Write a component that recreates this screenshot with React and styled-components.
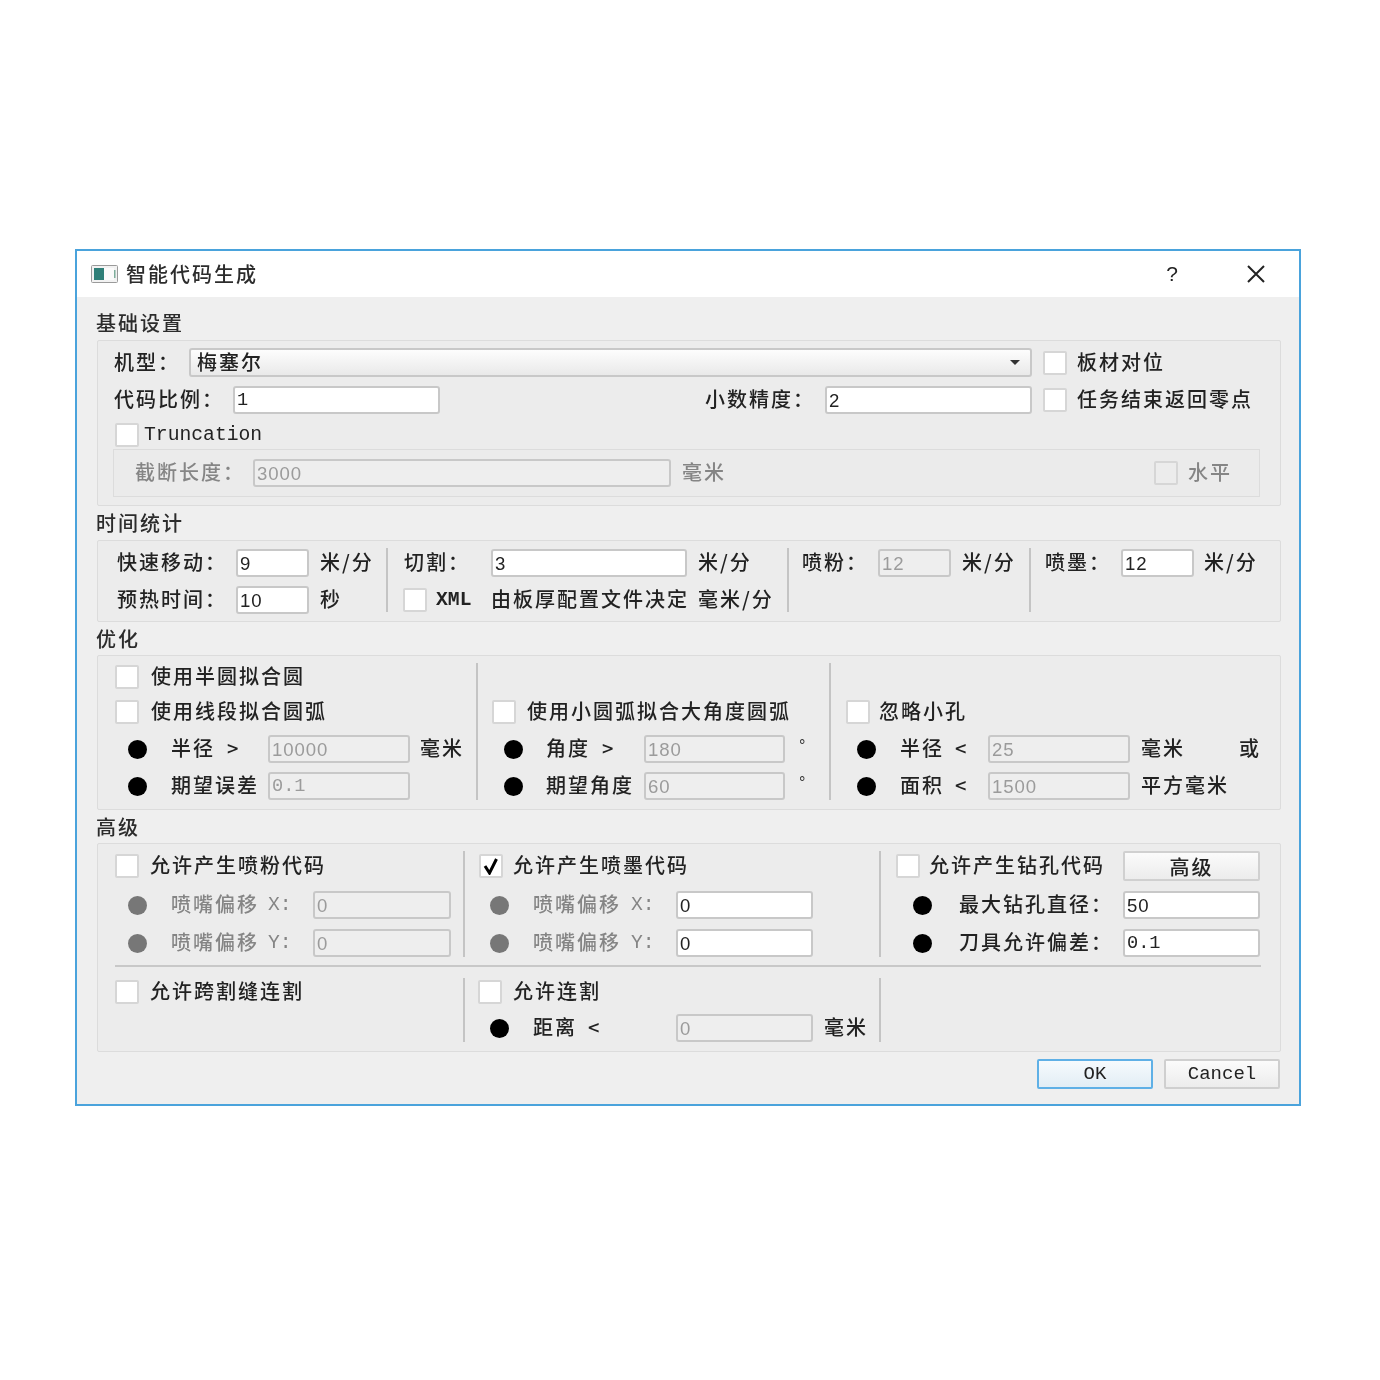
import React from "react";
import styled, { createGlobalStyle } from "styled-components";

const Global = createGlobalStyle`
  html, body { margin: 0; padding: 0; background: #fff; }
  body { font-family: "Noto Sans CJK SC", "Liberation Sans", sans-serif; }
  #root { width: 1380px; height: 1380px; padding: 249px 0 0 75px; box-sizing: border-box; overflow: hidden; }
`;

const Dialog = styled.div`
  width: 1226px; height: 857px; box-sizing: border-box;
  border: 2px solid #4aa3dc;
  background: #efefef; display: flex; flex-direction: column;
  color: #222; filter: blur(0.7px);
`;
const TitleBar = styled.div`
  height: 46px; flex: none; background: #fff; display: flex; align-items: center; padding: 0 0 0 14px;
`;
const TitleText = styled.div`
  font-size: 20px; font-weight: 500; letter-spacing: 2px; margin-left: 8px; flex: 1; line-height: 44px; color: #2c2c2c;
`;
const Help = styled.div`
  font: 21px "Liberation Sans", sans-serif; width: 20px; text-align: center; margin-right: 64px; color: #222;
`;
const CloseWrap = styled.div` width: 20px; height: 20px; margin-right: 33px; `;
const Body = styled.div` flex: 1; padding: 9px 18px 0 20px; display: flex; flex-direction: column; `;
const Heading = styled.div`
  height: ${p => p.$h || 34}px; line-height: ${p => p.$h || 34}px; font-size: 20px; font-weight: 500;
  letter-spacing: 2px; margin-left: -1px; color: #2c2c2c;
`;
const Panel = styled.div`
  box-sizing: border-box; height: ${p => p.$h}px; background: #ececec;
  border: 1px solid #dcdcdc; border-radius: 2px;
  padding: ${p => p.$pad || "0"};
`;
const Columns = styled.div`
  display: grid; grid-template-columns: ${p => p.$cols};
`;
const Col = styled.div` padding: ${p => p.$top || 0}px 0 0 ${p => p.$left || 0}px; min-width: 0; `;
const Sep = styled.div` width: 2px; background: #c4c4c4; height: ${p => p.$h}px; margin-top: ${p => p.$top || 0}px; `;
const Divider = styled.div` height: 2px; background: #c8c8c8; margin: 8px 19px 11px 17px; `;
const Row = styled.div`
  display: grid; grid-template-columns: ${p => p.$cols}; align-items: center;
  height: ${p => p.$h || 28}px; margin-top: ${p => p.$mt || 0}px;
`;
const Label = styled.div`
  font-size: 20px; font-weight: 500; letter-spacing: 2px; white-space: nowrap; line-height: 26px; padding-bottom: 2px;
  color: ${p => p.$off ? "#858585" : "#222"};
`;
const Latin = styled.div`
  font: ${p => p.$bold ? "bold " : ""}19.7px "Liberation Mono", monospace; white-space: nowrap;
  color: ${p => p.$off ? "#858585" : "#222"};
`;
const Degree = styled.div`
  font: 16px "Liberation Sans", sans-serif; color: #333; transform: translateY(-3px); margin-left: 1px;
`;
const Field = styled.div`
  box-sizing: border-box; height: 28px; border: 2px solid #c8c8c8; border-radius: 3px;
  background: ${p => p.$off ? "#eeeeee" : "#fff"};
  color: ${p => p.$off ? "#9b9b9b" : "#222"};
  font: 18.6px/26px ${p => p.$mono ? '"Liberation Mono", monospace' : '"Liberation Sans", sans-serif'};
  letter-spacing: ${p => p.$mono ? "0" : "0.9px"}; padding-left: 2px; white-space: nowrap; overflow: hidden;
`;
const Combo = styled.div`
  box-sizing: border-box; height: 29px; border: 2px solid #c8c8c8; border-radius: 3px;
  background: linear-gradient(#fdfdfd, #e9e9e9); display: flex; align-items: center; justify-content: space-between;
  padding: 0 10px 2px 6px; font-size: 20px; font-weight: 500; letter-spacing: 2px; color: #222;
`;
const Arrow = styled.div`
  width: 0; height: 0; margin-top: 2px; border-left: 5px solid transparent; border-right: 5px solid transparent; border-top: 5px solid #333;
`;
const Box = styled.div`
  box-sizing: border-box; width: 24px; height: 24px; border: 2px solid #d6d6d6; border-radius: 2px;
  background: ${p => p.$off ? "#ececec" : "#fff"}; display: flex; align-items: center; justify-content: center;
  margin-left: ${p => p.$ml || 0}px;
`;
const Dot = styled.div`
  width: 19px; height: 19px; border-radius: 50%; background: ${p => p.$off ? "#777" : "#000"};
  margin-left: ${p => p.$ml || 0}px;
`;
const Inner = styled.div`
  box-sizing: border-box; height: 48px; margin: 4px 20px 0 -1px; border: 1px solid #dcdcdc; background: #ebebeb;
  display: grid; grid-template-columns: 118px 418px 11px 472px 34px 1fr; align-items: center; padding-left: 21px;
`;
const Footer = styled.div` display: flex; justify-content: flex-end; gap: 11px; margin-top: 7px; padding-right: 1px; `;
const Btn = styled.div`
  box-sizing: border-box; width: 116px; height: 30px; border-radius: 2px;
  border: 2px solid ${p => p.$primary ? "#5fb0e6" : "#cfcfcf"};
  background: ${p => p.$primary ? "linear-gradient(#f6fafd, #e2edf5)" : "linear-gradient(#fbfbfb, #ececec)"};
  display: flex; align-items: center; justify-content: center;
  font: 19px "Liberation Mono", monospace; color: #222;
`;
const SmallBtn = styled(Btn)`
  width: 137px; font-family: "Noto Sans CJK SC", sans-serif; font-size: 20px; font-weight: 500; letter-spacing: 2px;
  border-color: #d0d0d0;
`;

const Check = () => (
  <svg width="18" height="18" viewBox="0 0 18 18"><path d="M3 9 L7.5 16 L14.5 2" fill="none" stroke="#000" strokeWidth="3" /></svg>
);

const AppIcon = () => (
  <svg width="27" height="18" viewBox="0 0 27 18">
    <rect x="0.5" y="0.5" width="26" height="17" rx="1" fill="#f2f2f2" stroke="#9a9a9a" />
    <rect x="3" y="3" width="10" height="12" fill="#2f7f78" />
    <rect x="13" y="3" width="10" height="12" fill="#fbfbfb" />
    <rect x="23" y="5" width="1.5" height="8" fill="#7fae9c" />
  </svg>
);

const Close = () => (
  <svg width="20" height="20" viewBox="0 0 20 20"><path d="M2 2 L18 18 M18 2 L2 18" stroke="#222" strokeWidth="2" fill="none" /></svg>
);

const unitRow = "119px 73px 11px 1fr";
const optCb1 = "36px 1fr";
const optRow1 = "56px 56px 41px 142px 10px 1fr";
const optRow2 = "54px 56px 42px 141px 13px 1fr";
const optRow3 = "54px 55px 33px 142px 11px 98px auto";
const advRow1 = "56px 97px 45px 138px";
const advRow2 = "54px 98px 45px 137px";
const advRow3 = "63px 164px 137px";

export default function App() {
  return (
    <>
      <Global />
      <Dialog>
        <TitleBar>
          <AppIcon />
          <TitleText>智能代码生成</TitleText>
          <Help>?</Help>
          <CloseWrap><Close /></CloseWrap>
        </TitleBar>
        <Body>
          <Heading>基础设置</Heading>
          <Panel $h={166} $pad="7px 0 0 16px">
            <Row $cols="75px 843px 11px 23px 11px 1fr" $h={29}>
              <Label>机型：</Label>
              <Combo>梅塞尔<Arrow /></Combo>
              <span />
              <Box />
              <span />
              <Label>板材对位</Label>
            </Row>
            <Row $cols="119px 207px 265px 120px 207px 11px 23px 11px 1fr" $mt={9}>
              <Label>代码比例：</Label>
              <Field $mono>1</Field>
              <span />
              <Label>小数精度：</Label>
              <Field>2</Field>
              <span />
              <Box />
              <span />
              <Label>任务结束返回零点</Label>
            </Row>
            <Row $cols="30px 1fr" $h={22} $mt={9}>
              <Box $ml={1} />
              <Latin>Truncation</Latin>
            </Row>
            <Inner>
              <Label $off>截断长度：</Label>
              <Field $off>3000</Field>
              <span />
              <Label $off>毫米</Label>
              <Box $off />
              <Label $off>水平</Label>
            </Inner>
          </Panel>

          <Heading>时间统计</Heading>
          <Panel $h={82}>
            <Columns $cols="288px 2px 399px 2px 240px 2px 1fr">
              <Col $left={19} $top={8}>
                <Row $cols={unitRow}>
                  <Label>快速移动：</Label>
                  <Field>9</Field>
                  <span />
                  <Label>米/分</Label>
                </Row>
                <Row $cols={unitRow} $mt={9}>
                  <Label>预热时间：</Label>
                  <Field>10</Field>
                  <span />
                  <Label>秒</Label>
                </Row>
              </Col>
              <Sep $h={64} $top={7} />
              <Col $left={16} $top={8}>
                <Row $cols="87px 196px 11px 1fr">
                  <Label>切割：</Label>
                  <Field>3</Field>
                  <span />
                  <Label>米/分</Label>
                </Row>
                <Row $cols="32px 55px 207px 1fr" $mt={9}>
                  <Box $ml={-1} />
                  <Latin $bold>XML</Latin>
                  <Label>由板厚配置文件决定</Label>
                  <Label>毫米/分</Label>
                </Row>
              </Col>
              <Sep $h={64} $top={7} />
              <Col $left={13} $top={8}>
                <Row $cols="76px 73px 11px 1fr">
                  <Label>喷粉：</Label>
                  <Field $off>12</Field>
                  <span />
                  <Label>米/分</Label>
                </Row>
              </Col>
              <Sep $h={64} $top={7} />
              <Col $left={14} $top={8}>
                <Row $cols="76px 73px 10px 1fr">
                  <Label>喷墨：</Label>
                  <Field>12</Field>
                  <span />
                  <Label>米/分</Label>
                </Row>
              </Col>
            </Columns>
          </Panel>

          <Heading $h={33}>优化</Heading>
          <Panel $h={155}>
            <Columns $cols="378px 2px 351px 2px 1fr">
              <Col $left={17} $top={7}>
                <Row $cols={optCb1} $h={26}>
                  <Box />
                  <Label>使用半圆拟合圆</Label>
                </Row>
                <Row $cols={optCb1} $h={26} $mt={9}>
                  <Box />
                  <Label>使用线段拟合圆弧</Label>
                </Row>
                <Row $cols={optRow1} $mt={11}>
                  <Dot $ml={13} />
                  <Label>半径</Label>
                  <Label>&gt;</Label>
                  <Field $off>10000</Field>
                  <span />
                  <Label>毫米</Label>
                </Row>
                <Row $cols={optRow1} $mt={9}>
                  <Dot $ml={13} />
                  <Label>期望误差</Label>
                  <span />
                  <Field $off $mono>0.1</Field>
                </Row>
              </Col>
              <Sep $h={137} $top={7} />
              <Col $left={14} $top={7}>
                <Row $cols="35px 1fr" $h={26} $mt={35}>
                  <Box />
                  <Label>使用小圆弧拟合大角度圆弧</Label>
                </Row>
                <Row $cols={optRow2} $mt={11}>
                  <Dot $ml={12} />
                  <Label>角度</Label>
                  <Label>&gt;</Label>
                  <Field $off>180</Field>
                  <span />
                  <Degree>°</Degree>
                </Row>
                <Row $cols={optRow2} $mt={9}>
                  <Dot $ml={12} />
                  <Label>期望角度</Label>
                  <span />
                  <Field $off>60</Field>
                  <span />
                  <Degree>°</Degree>
                </Row>
              </Col>
              <Sep $h={137} $top={7} />
              <Col $left={15} $top={7}>
                <Row $cols="33px 1fr" $h={26} $mt={35}>
                  <Box />
                  <Label>忽略小孔</Label>
                </Row>
                <Row $cols={optRow3} $mt={11}>
                  <Dot $ml={11} />
                  <Label>半径</Label>
                  <Label>&lt;</Label>
                  <Field $off>25</Field>
                  <span />
                  <Label>毫米</Label>
                  <Label>或</Label>
                </Row>
                <Row $cols={optRow3} $mt={9}>
                  <Dot $ml={11} />
                  <Label>面积</Label>
                  <Label>&lt;</Label>
                  <Field $off>1500</Field>
                  <span />
                  <Label>平方毫米</Label>
                </Row>
              </Col>
            </Columns>
          </Panel>

          <Heading $h={33}>高级</Heading>
          <Panel $h={209} $pad="7px 0 0 0">
            <Columns $cols="365px 2px 414px 2px 1fr">
              <Col $left={17}>
                <Row $cols="35px 1fr" $h={30}>
                  <Box />
                  <Label>允许产生喷粉代码</Label>
                </Row>
                <Row $cols={advRow1} $mt={10}>
                  <Dot $ml={13} $off />
                  <Label $off>喷嘴偏移</Label>
                  <Latin $off>X:</Latin>
                  <Field $off>0</Field>
                </Row>
                <Row $cols={advRow1} $mt={10}>
                  <Dot $ml={13} $off />
                  <Label $off>喷嘴偏移</Label>
                  <Latin $off>Y:</Latin>
                  <Field $off>0</Field>
                </Row>
              </Col>
              <Sep $h={106} />
              <Col $left={14}>
                <Row $cols="34px 1fr" $h={30}>
                  <Box><Check /></Box>
                  <Label>允许产生喷墨代码</Label>
                </Row>
                <Row $cols={advRow2} $mt={10}>
                  <Dot $ml={11} $off />
                  <Label $off>喷嘴偏移</Label>
                  <Latin $off>X:</Latin>
                  <Field>0</Field>
                </Row>
                <Row $cols={advRow2} $mt={10}>
                  <Dot $ml={11} $off />
                  <Label $off>喷嘴偏移</Label>
                  <Latin $off>Y:</Latin>
                  <Field>0</Field>
                </Row>
              </Col>
              <Sep $h={106} />
              <Col $left={15}>
                <Row $cols="33px 194px 137px" $h={30}>
                  <Box />
                  <Label>允许产生钻孔代码</Label>
                  <SmallBtn>高级</SmallBtn>
                </Row>
                <Row $cols={advRow3} $mt={10}>
                  <Dot $ml={17} />
                  <Label>最大钻孔直径：</Label>
                  <Field>50</Field>
                </Row>
                <Row $cols={advRow3} $mt={10}>
                  <Dot $ml={17} />
                  <Label>刀具允许偏差：</Label>
                  <Field $mono>0.1</Field>
                </Row>
              </Col>
            </Columns>
            <Divider />
            <Columns $cols="365px 2px 414px 2px 1fr">
              <Col $left={17}>
                <Row $cols="35px 1fr" $h={26}>
                  <Box />
                  <Label>允许跨割缝连割</Label>
                </Row>
              </Col>
              <Sep $h={64} />
              <Col $left={13}>
                <Row $cols="35px 1fr" $h={26}>
                  <Box />
                  <Label>允许连割</Label>
                </Row>
                <Row $cols="55px 55px 88px 137px 11px 1fr" $mt={10}>
                  <Dot $ml={12} />
                  <Label>距离</Label>
                  <Label>&lt;</Label>
                  <Field $off>0</Field>
                  <span />
                  <Label>毫米</Label>
                </Row>
              </Col>
              <Sep $h={64} />
              <span />
            </Columns>
          </Panel>
          <Footer>
            <Btn $primary>OK</Btn>
            <Btn>Cancel</Btn>
          </Footer>
        </Body>
      </Dialog>
    </>
  );
}
